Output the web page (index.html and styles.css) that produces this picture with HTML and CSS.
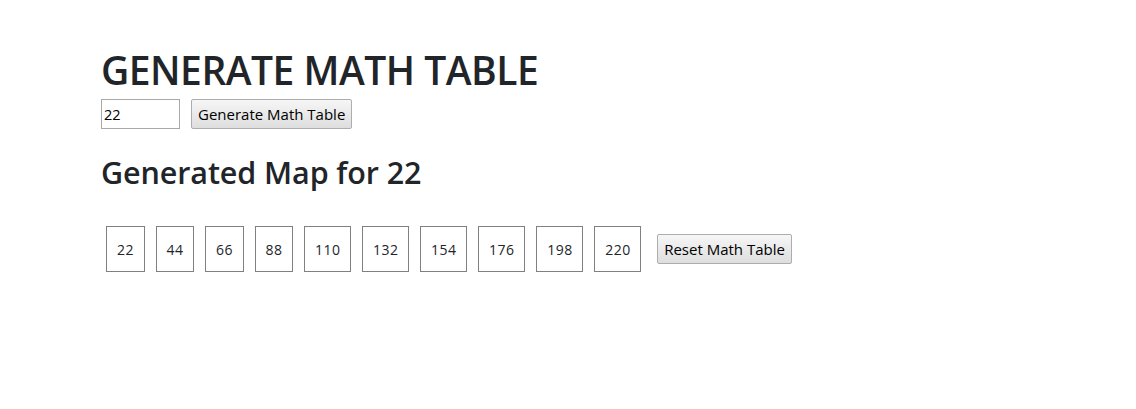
FILE: index.html
```html
<!DOCTYPE html>
<html>
<head>
<meta charset="utf-8">
<link rel="stylesheet" href="styles.css">
</head>
<body>
<div class="container">
  <h1 class="title">GENERATE MATH TABLE</h1>
  <div class="controls">
    <input class="num-input" type="text" value="22">
    <button class="btn">Generate Math Table</button>
  </div>
  <h2 class="subtitle">Generated Map for 22</h2>
  <div class="table-row">
    <span class="cell">22</span>
    <span class="cell">44</span>
    <span class="cell">66</span>
    <span class="cell">88</span>
    <span class="cell">110</span>
    <span class="cell">132</span>
    <span class="cell">154</span>
    <span class="cell">176</span>
    <span class="cell">198</span>
    <span class="cell">220</span>
    <button class="btn reset">Reset Math Table</button>
  </div>
</div>
</body>
</html>
```
FILE: styles.css
```css
html, body {
  margin: 0;
  padding: 0;
  background: #fff;
}
body {
  font-family: "Open Sans", "Noto Sans", sans-serif;
  color: #212529;
  font-size: 14px;
}
.container {
  padding: 46px 0 0 101px;
}
.title {
  margin: 0;
  font-size: 39px;
  font-weight: 600;
  line-height: 48px;
  letter-spacing: -0.5px;
}
.controls {
  display: flex;
  align-items: center;
  gap: 11px;
  margin-top: 5px;
}
.num-input {
  box-sizing: border-box;
  width: 79px;
  height: 30px;
  border: 1px solid #a9a9a9;
  padding: 0 2px;
  font-family: "Open Sans", sans-serif;
  font-size: 14.5px;
  color: #000;
  outline: none;
}
.btn {
  box-sizing: border-box;
  height: 30px;
  padding: 0 6px;
  border: 1px solid #adadad;
  border-radius: 2px;
  background: linear-gradient(#f6f6f6, #dedede);
  font-family: "Open Sans", sans-serif;
  font-size: 15px;
  color: #000;
}
.subtitle {
  margin: 23px 0 0;
  font-size: 30.5px;
  font-weight: 600;
  line-height: 40px;
  letter-spacing: -0.1px;
}
.table-row {
  display: flex;
  align-items: center;
  gap: 11px;
  margin-top: 34px;
  padding-left: 5px;
}
.cell {
  box-sizing: border-box;
  height: 46px;
  padding: 0 9.5px 0 10px;
  border: 1px solid #808080;
  display: flex;
  align-items: center;
  justify-content: center;
  font-size: 14px;
  letter-spacing: 0.5px;
}
.reset {
  margin-left: 5px;
}
```
